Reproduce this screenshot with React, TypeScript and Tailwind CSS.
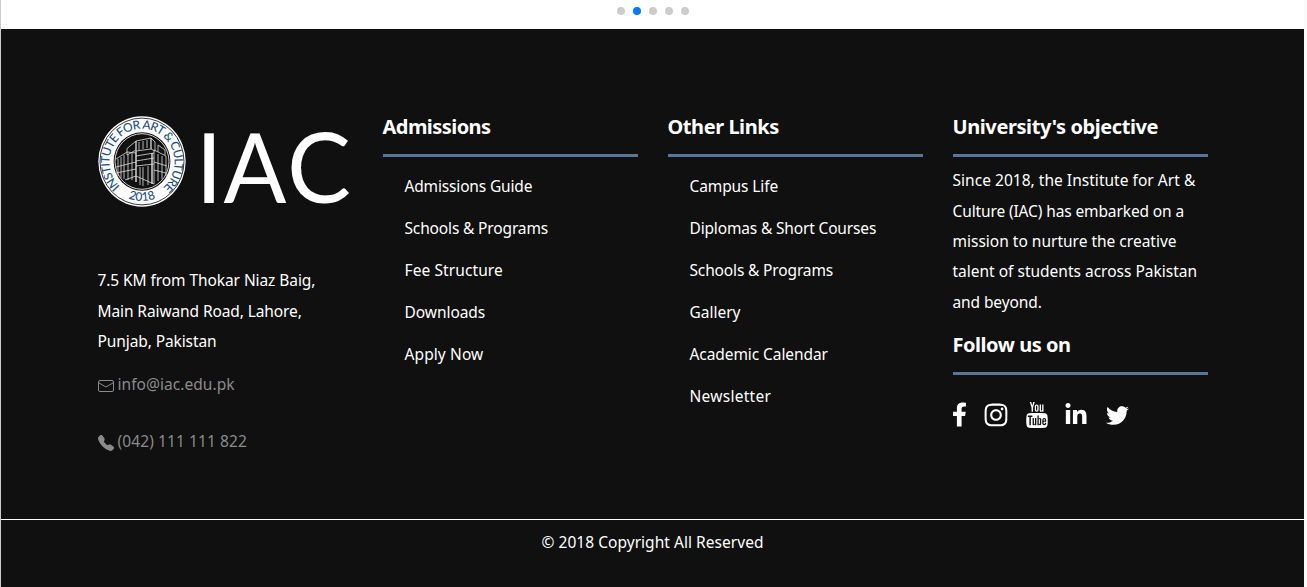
import { BsTelephoneFill } from "react-icons/bs";
import { FaFacebookF, FaInstagram, FaLinkedinIn, FaTwitter } from "react-icons/fa";
import { TfiYoutube } from "react-icons/tfi";

const admissions = [
  { label: "Admissions Guide", cls: "tracking-[-0.16px]" },
  { label: "Schools & Programs", cls: "tracking-[-0.15px]" },
  { label: "Fee Structure", cls: "tracking-[0.1px]" },
  { label: "Downloads", cls: "tracking-[-0.05px]" },
  { label: "Apply Now", cls: "tracking-[0.1px]" },
];

const otherLinks = [
  { label: "Campus Life", cls: "tracking-[-0.1px]" },
  { label: "Diplomas & Short Courses", cls: "tracking-[-0.16px]" },
  { label: "Schools & Programs", cls: "tracking-[-0.15px]" },
  { label: "Gallery", cls: "tracking-normal" },
  { label: "Academic Calendar", cls: "tracking-[-0.08px]" },
  { label: "Newsletter", cls: "tracking-[0.27px]" },
];

function Heading({ children, cls }: { children: string; cls: string }) {
  return (
    <h4 className="h-[42px] whitespace-nowrap border-b-[3px] border-[#5b7597] text-[20px] font-bold leading-6">
      <span className={cls}>{children}</span>
    </h4>
  );
}

function LinkList({ items }: { items: { label: string; cls: string }[] }) {
  return (
    <ul className="mt-[8px] pl-[22px]">
      {items.map((item) => (
        <li key={item.label} className="h-[42px] whitespace-nowrap leading-[42px]">
          <a href="#" className={item.cls}>{item.label}</a>
        </li>
      ))}
    </ul>
  );
}

function EnvelopeIcon() {
  return (
    <svg viewBox="0 0 16 16" className="mt-[3px] size-4" fill="none" stroke="currentColor">
      <rect x=".5" y="2.5" width="15" height="11" rx="1.5" />
      <path d="M.6 4.7 8 9l7.4-4.3" />
    </svg>
  );
}

function Logo() {
  return (
    <svg viewBox="0 0 255 92" className="block h-[92px] w-[255px] overflow-visible">
      <defs>
        <path id="ring" d="M 22 70.5 A 32.5 33.2 0 1 1 66 70.5" />
        <path id="base" d="M 14 70.2 A 38.5 39.5 0 0 0 74 70.2" />
      </defs>
      <ellipse cx="44" cy="45.5" rx="43.7" ry="45.2" fill="#fff" />
      <ellipse cx="44" cy="45.5" rx="42" ry="43.4" fill="none" stroke="#222" strokeWidth=".9" />
      <ellipse cx="44" cy="45.5" rx="28.4" ry="29.2" fill="#111" />
      <ellipse cx="44" cy="45.5" rx="27" ry="27.8" fill="none" stroke="#fff" strokeWidth=".8" />
      <g fill="none" stroke="#ddd" strokeWidth=".8">
        <path d="M29 32.5 38 25v9l-9 5zM38 25l15-3v11l-15 2zM53 22l4 4v9l-4-2zM41 26v8M45 25v8M49 24v8" />
        <path d="M18 43l11-7 9 1M20 43v17M23 41v21M26 39v24M30 38v26M34 37v27M38 40l18-3M38 45l18-3M38 50l18-2M56 34l12 6v20M60 29l7 5v5M60 29v7M42 51v18M45 51v19M50 50v19M56 34v34M60 38v27M64 40v23M18 51l20-5M18 57l20-4M56 46l13 4M56 54l12 3M27 64l11-4 18 8" />
        <path d="M38 35v31M54 37v31" strokeWidth="1.4" />
      </g>
      <g fontFamily="Lato, sans-serif" fill="#1d4f8f" fontWeight="500">
        <text fontSize="12"><textPath href="#ring" textLength="159" lengthAdjust="spacing">INSTITUTE FOR ART &amp; CULTURE</textPath></text>
        <text fontSize="12" textAnchor="middle"><textPath href="#base" startOffset="50%">2018</textPath></text>
      </g>
      <g fontFamily="Lato, sans-serif" fill="#fff" fontSize="97">
        <text x="97.5" y="86.8">I</text>
        <text x="125.5" y="86.8" textLength="63" lengthAdjust="spacingAndGlyphs">A</text>
        <text x="189" y="86.8" textLength="64" lengthAdjust="spacingAndGlyphs">C</text>
      </g>
    </svg>
  );
}

export default function App() {
  return (
    <div className="flex h-[587px] w-[1307px] overflow-hidden border-l border-[#ccc] bg-[#fafafa] font-['Noto_Sans',sans-serif] text-[15.5px] text-white">
      <div className="flex w-[1303px] flex-col">
        <div className="flex h-[29px] justify-center gap-2 bg-white pt-[7px]">
          {[0, 1, 2, 3, 4].map((n) => (
            <span key={n} className={n === 1 ? "size-2 rounded-full bg-[#007bff]" : "size-2 rounded-full bg-[#ccc]"} />
          ))}
        </div>
        <footer className="flex-1 bg-[#101010]">
          <div className="h-[490px] pt-[86px]">
            <div className="mx-auto grid w-[1140px] grid-cols-4">
              <div className="px-[15px] pt-px">
                <Logo />
                <address className="mt-[57.2px] whitespace-nowrap not-italic leading-[30.4px]">
                  <div className="tracking-[-0.08px]">7.5 KM from Thokar Niaz Baig,</div>
                  <div className="tracking-[-0.1px]">Main Raiwand Road, Lahore,</div>
                  <div className="tracking-[-0.1px]">Punjab, Pakistan</div>
                </address>
                <div className="mt-[12.8px] flex h-[30px] items-center gap-1 tracking-[0.05px] text-[#8b8b8b]">
                  <EnvelopeIcon />
                  <a href="#">info@iac.edu.pk</a>
                </div>
                <div className="mt-[27px] flex h-[30px] items-center gap-1 tracking-[0.1px] text-[#8b8b8b]">
                  <BsTelephoneFill className="mt-[3px] size-4" />
                  <a href="#">(042) 111 111 822</a>
                </div>
              </div>
              <div className="px-[15px]">
                <Heading cls="tracking-[-0.55px]">Admissions</Heading>
                <LinkList items={admissions} />
              </div>
              <div className="px-[15px]">
                <Heading cls="tracking-[-0.45px]">Other Links</Heading>
                <LinkList items={otherLinks} />
              </div>
              <div className="px-[15px]">
                <Heading cls="tracking-[-0.41px]">University's objective</Heading>
                <p className="mt-[8.2px] whitespace-nowrap leading-[30.4px]">
                  <span className="block tracking-[0.03px]">Since 2018, the Institute for Art &amp;</span>
                  <span className="block tracking-[-0.12px]">Culture (IAC) has embarked on a</span>
                  <span className="block">mission to nurture the creative</span>
                  <span className="block">talent of students across Pakistan</span>
                  <span className="block tracking-[-0.1px]">and beyond.</span>
                </p>
                <div className="mt-[15.8px]">
                  <Heading cls="tracking-[-0.45px]">Follow us on</Heading>
                </div>
                <div className="mt-[26px] flex h-[28px] items-center">
                  <FaFacebookF className="-ml-px -mt-[2px] h-[25px] w-[15px]" />
                  <FaInstagram className="ml-[16px] size-[26px]" />
                  <TfiYoutube className="ml-[15px] size-[26px]" />
                  <FaLinkedinIn className="ml-[14.5px] size-[24px]" />
                  <FaTwitter className="ml-[18px] size-[23px]" />
                </div>
              </div>
            </div>
          </div>
          <div className="border-t border-white pt-[10px] text-center leading-6">
            <span className="tracking-[0.04px]">© 2018 Copyright All Reserved</span>
          </div>
        </footer>
      </div>
    </div>
  );
}
